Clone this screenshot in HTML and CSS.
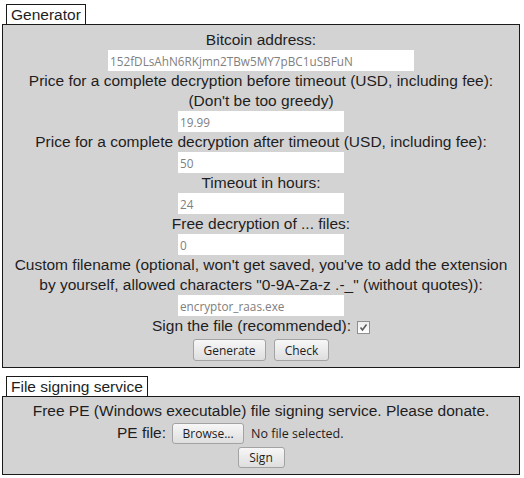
FILE: index.html
```html
<!DOCTYPE html>
<html>
<head>
<meta charset="utf-8">
<link rel="stylesheet" href="styles.css">
</head>
<body>
<div class="page">
  <div class="tab">Generator</div>
  <div class="panel gen">
    <div class="line">Bitcoin address:</div>
    <input class="field wide" placeholder="152fDLsAhN6RKjmn2TBw5MY7pBC1uSBFuN">
    <div class="line">Price for a complete decryption before timeout (USD, including fee):</div>
    <div class="line">(Don't be too greedy)</div>
    <input class="field" placeholder="19.99">
    <div class="line">Price for a complete decryption after timeout (USD, including fee):</div>
    <input class="field" placeholder="50">
    <div class="line">Timeout in hours:</div>
    <input class="field" placeholder="24">
    <div class="line">Free decryption of ... files:</div>
    <input class="field" placeholder="0">
    <div class="line">Custom filename (optional, won't get saved, you've to add the extension</div>
    <div class="line">by yourself, allowed characters "0-9A-Za-z .-_" (without quotes)):</div>
    <input class="field" placeholder="encryptor_raas.exe">
    <div class="line signrow">Sign the file (recommended): <span class="check"><svg width="11" height="11" viewBox="0 0 11 11"><path d="M2.5 5.5 L4.5 8 L8.5 2.5" fill="none" stroke="#5a5a5a" stroke-width="1.6"/></svg></span></div>
    <div class="buttons">
      <button class="btn btn-gen">Generate</button>
      <button class="btn btn-check">Check</button>
    </div>
  </div>

  <div class="tab tab2">File signing service</div>
  <div class="panel sign">
    <div class="line">Free PE (Windows executable) file signing service. Please donate.</div>
    <div class="filerow">
      <span class="pelabel">PE file:</span>
      <button class="btn btn-browse">Browse...</button>
      <span class="nofile">No file selected.</span>
    </div>
    <button class="btn btn-sign">Sign</button>
  </div>
</div>
</body>
</html>
```

FILE: styles.css
```css
html, body {
  margin: 0;
  padding: 0;
  background: #ffffff;
}
body {
  font-family: "Liberation Sans", Arial, sans-serif;
  font-size: 15.5px;
  color: #1e1e1e;
}
.page {
  padding: 4px 0 0 2px;
  width: 518px;
}
.tab {
  display: inline-block;
  margin-left: 4px;
  padding: 0 4px 0 4px;
  height: 19px;
  line-height: 19px;
  border: 1px solid #1a1a1a;
  border-bottom: none;
  background: #ffffff;
}
.tab2 {
  margin-top: 8px;
}
.panel {
  border: 1px solid #1a1a1a;
  background: #d4d3d4;
  display: flex;
  flex-direction: column;
  align-items: center;
}
.gen {
  padding: 5px 0 6px;
}
.sign {
  padding: 4px 0 6px;
}
.line {
  height: 20px;
  line-height: 20px;
  white-space: nowrap;
}
.field {
  box-sizing: border-box;
  width: 166px;
  height: 21px;
  margin: 0;
  padding: 1px 2px 0;
  border: none;
  background: #ffffff;
  font-family: "Open Sans", sans-serif;
  font-size: 11.75px;
  outline: none;
}
.field.wide {
  width: 306px;
}
.field::placeholder {
  color: #808080;
}
.signrow {
  display: flex;
  align-items: center;
}
.check {
  display: inline-block;
  box-sizing: border-box;
  width: 13px;
  height: 13px;
  margin-left: 6px;
  border: 1px solid #8f8f8f;
  background: linear-gradient(#ececec, #ffffff);
  position: relative;
  top: 1px;
}
.check svg {
  display: block;
}
.buttons {
  display: flex;
  gap: 8px;
  margin-top: 3px;
}
.btn {
  box-sizing: border-box;
  height: 22px;
  padding: 0;
  border: 1px solid #a3a3a3;
  border-radius: 3px;
  background: linear-gradient(#f7f7f7, #dedede);
  font-family: "Open Sans", sans-serif;
  font-size: 12px;
  color: #1e1e1e;
}
.btn-gen { width: 73px; }
.btn-check { width: 55px; }
.filerow {
  display: flex;
  align-items: center;
  height: 22px;
  margin-top: 1px;
}
.pelabel {
  margin-right: 6px;
}
.btn-browse {
  width: 72px;
  height: 21px;
}
.nofile {
  box-sizing: border-box;
  width: 161px;
  padding-left: 7px;
  font-family: "Open Sans", sans-serif;
  font-size: 12.5px;
}
.btn-sign {
  width: 47px;
  height: 21px;
  margin-top: 3px;
}
```
